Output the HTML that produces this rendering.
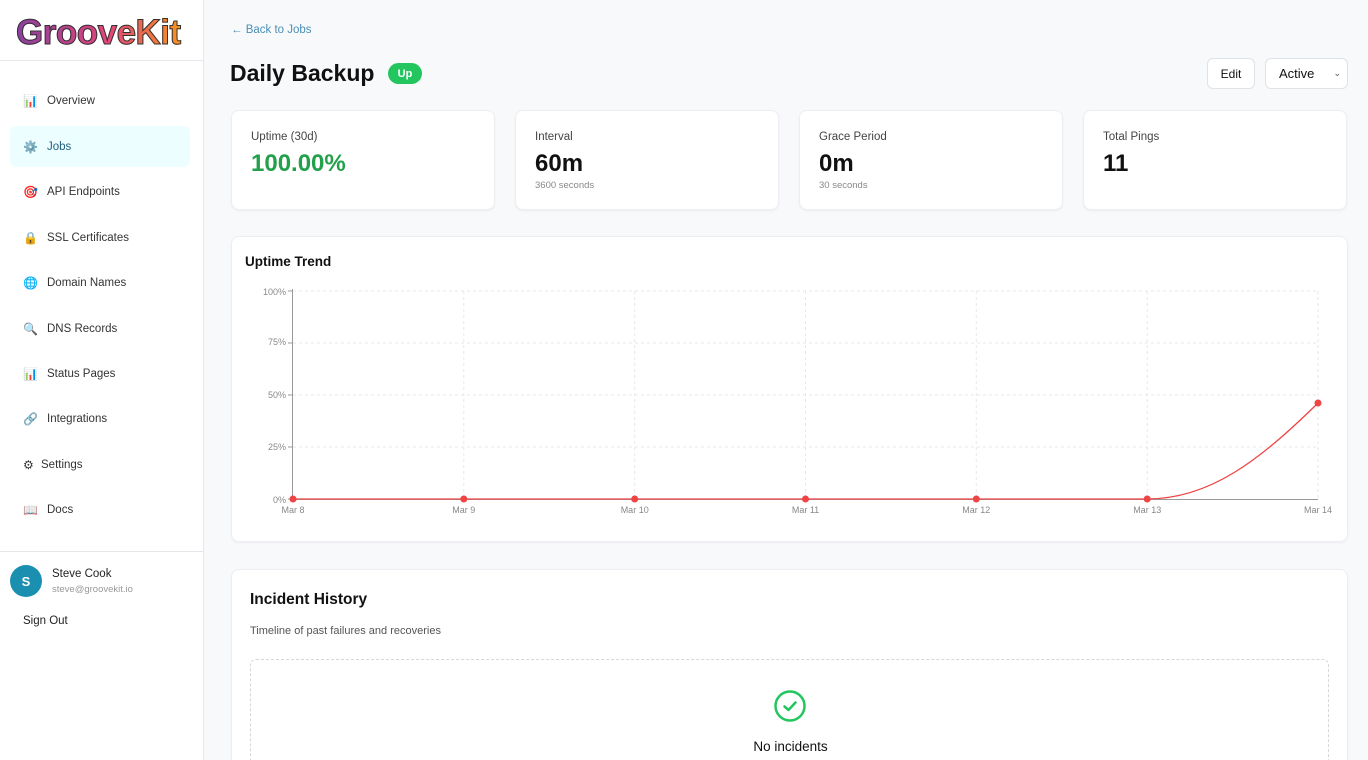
<!DOCTYPE html>
<html><head><meta charset="utf-8"><style>
*{box-sizing:border-box;margin:0;padding:0}
html,body{width:1368px;height:760px;overflow:hidden}
body{background:#f8f9fb;font-family:"Liberation Sans",Arial,sans-serif;color:#111;position:relative}
.sb{position:absolute;left:0;top:0;width:204px;height:760px;background:#fff;border-right:1px solid #e5e7eb}
.logo{position:absolute;left:16px;top:13px;font-size:35px;font-weight:900;letter-spacing:-0.5px;background:linear-gradient(90deg,#8b3fa0,#e0457a 55%,#f7931e);-webkit-background-clip:text;color:transparent;-webkit-text-stroke:1px #333}
.hr{position:absolute;left:0;width:203px;height:1px;background:#e5e7eb}
.nav{position:absolute;left:10px;width:180px;height:41px;display:flex;align-items:center;padding-left:13px;font-size:11.5px;color:#333;border-radius:6px}
.nav .i{width:16px;font-size:12px;margin-right:8px}
.nav.act{background:#ecfeff;color:#1f5f7a}
.card{position:absolute;background:#fff;border:1px solid #eceef1;border-radius:8px;box-shadow:0 1px 2px rgba(0,0,0,.05)}
.lbl{position:absolute;left:19px;top:20px;font-size:11.5px;color:#444}
.val{position:absolute;left:19px;top:39px;font-size:24px;font-weight:700}
.sub{position:absolute;left:19px;top:69px;font-size:9.5px;color:#888}
.btn{position:absolute;background:#fff;border:1px solid #dfe2e6;border-radius:6px;font-size:12px;display:flex;align-items:center}
</style></head><body>
<div class="sb">
<div class="logo">GrooveKit</div>
<div class="hr" style="top:60px"></div>
<div class="nav" style="top:80px"><span class="i">📊</span>Overview</div>
<div class="nav act" style="top:126px"><span class="i">⚙️</span>Jobs</div>
<div class="nav" style="top:171px"><span class="i">🎯</span>API Endpoints</div>
<div class="nav" style="top:217px"><span class="i">🔒</span>SSL Certificates</div>
<div class="nav" style="top:262px"><span class="i">🌐</span>Domain Names</div>
<div class="nav" style="top:308px"><span class="i">🔍</span>DNS Records</div>
<div class="nav" style="top:353px"><span class="i">📊</span>Status Pages</div>
<div class="nav" style="top:398px"><span class="i">🔗</span>Integrations</div>
<div class="nav" style="top:444px"><span class="i" style="width:10px">⚙</span>Settings</div>
<div class="nav" style="top:489px"><span class="i">📖</span>Docs</div>
<div class="hr" style="top:551px"></div>
<div style="position:absolute;left:10px;top:565px;width:32px;height:32px;border-radius:50%;background:#1a8fb0;color:#fff;font-weight:700;font-size:13px;display:flex;align-items:center;justify-content:center">S</div>
<div style="position:absolute;left:52px;top:568px;font-size:11.5px;color:#222">Steve Cook</div>
<div style="position:absolute;left:52px;top:584px;font-size:9.5px;color:#999">steve@groovekit.io</div>
<div style="position:absolute;left:23px;top:615px;font-size:11.5px;color:#222">Sign Out</div>
</div>

<div style="position:absolute;left:231px;top:24px;font-size:11.5px;color:#4a8fb5">← Back to Jobs</div>
<div style="position:absolute;left:230px;top:60px;font-size:23px;font-weight:700">Daily Backup</div>
<div style="position:absolute;left:388px;top:63px;width:34px;height:21px;border-radius:11px;background:#22c55e;color:#fff;font-size:11px;font-weight:700;display:flex;align-items:center;justify-content:center">Up</div>
<div class="btn" style="left:1207px;top:58px;width:48px;height:31px;justify-content:center">Edit</div>
<div class="btn" style="left:1265px;top:58px;width:83px;height:31px;padding-left:13px;font-size:13px">Active<span style="position:absolute;right:6px;font-size:9px;color:#555">⌄</span></div>

<div class="card" style="left:231px;top:110px;width:264px;height:100px"><div class="lbl">Uptime (30d)</div><div class="val" style="color:#22a04a">100.00%</div></div>
<div class="card" style="left:515px;top:110px;width:264px;height:100px"><div class="lbl">Interval</div><div class="val">60m</div><div class="sub">3600 seconds</div></div>
<div class="card" style="left:799px;top:110px;width:264px;height:100px"><div class="lbl">Grace Period</div><div class="val">0m</div><div class="sub">30 seconds</div></div>
<div class="card" style="left:1083px;top:110px;width:264px;height:100px"><div class="lbl">Total Pings</div><div class="val">11</div></div>

<div class="card" style="left:231px;top:236px;width:1117px;height:306px"><div style="position:absolute;left:13px;top:17px;font-size:13.5px;font-weight:600">Uptime Trend</div></div>
<svg style="position:absolute;left:0;top:0" width="1368" height="760" font-family="Liberation Sans,Arial" font-size="9" fill="#888">
<g stroke="#e5e7eb" stroke-dasharray="3 3">
<line x1="293" y1="291" x2="1318" y2="291"/><line x1="293" y1="343" x2="1318" y2="343"/><line x1="293" y1="395" x2="1318" y2="395"/><line x1="293" y1="447" x2="1318" y2="447"/>
<line x1="463.8" y1="291" x2="463.8" y2="499"/><line x1="634.7" y1="291" x2="634.7" y2="499"/><line x1="805.5" y1="291" x2="805.5" y2="499"/><line x1="976.3" y1="291" x2="976.3" y2="499"/><line x1="1147.2" y1="291" x2="1147.2" y2="499"/><line x1="1318" y1="291" x2="1318" y2="499"/>
</g>
<line x1="292.5" y1="289" x2="292.5" y2="500" stroke="#999"/><line x1="292" y1="499.5" x2="1318" y2="499.5" stroke="#999"/>
<g stroke="#999"><line x1="288" y1="291" x2="292" y2="291"/><line x1="288" y1="343" x2="292" y2="343"/><line x1="288" y1="395" x2="292" y2="395"/><line x1="288" y1="447" x2="292" y2="447"/><line x1="288" y1="499" x2="292" y2="499"/></g>
<g text-anchor="end"><text x="286" y="295">100%</text><text x="286" y="345">75%</text><text x="286" y="398">50%</text><text x="286" y="450">25%</text><text x="286" y="503">0%</text></g>
<g text-anchor="middle"><text x="293" y="513">Mar 8</text><text x="463.8" y="513">Mar 9</text><text x="634.7" y="513">Mar 10</text><text x="805.5" y="513">Mar 11</text><text x="976.3" y="513">Mar 12</text><text x="1147.2" y="513">Mar 13</text><text x="1318" y="513">Mar 14</text></g>
<path d="M293 499 L1147.2 499 C1210 499 1260 460 1318 403" fill="none" stroke="#ef4444" stroke-width="1.3"/>
<g fill="#ef4444"><circle cx="293" cy="499" r="3.5"/><circle cx="463.8" cy="499" r="3.5"/><circle cx="634.7" cy="499" r="3.5"/><circle cx="805.5" cy="499" r="3.5"/><circle cx="976.3" cy="499" r="3.5"/><circle cx="1147.2" cy="499" r="3.5"/><circle cx="1318" cy="403" r="3.5"/></g>
</svg>

<div class="card" style="left:231px;top:569px;width:1117px;height:191px;overflow:hidden;border-bottom:none;border-radius:8px 8px 0 0">
<div style="position:absolute;left:18px;top:21px;font-size:15.5px;font-weight:600">Incident History</div>
<div style="position:absolute;left:18px;top:55px;font-size:11px;color:#555">Timeline of past failures and recoveries</div>
<div style="position:absolute;left:18px;top:89px;width:1079px;height:102px;border:1px dashed #d4d7dc;border-bottom:none;border-radius:6px 6px 0 0"></div>
<svg style="position:absolute;left:541px;top:119px" width="34" height="34" viewBox="0 0 34 34"><circle cx="17" cy="17" r="14.5" fill="none" stroke="#22c55e" stroke-width="2.5"/><path d="M11.5 17.5l4 3.5 7-7.5" fill="none" stroke="#22c55e" stroke-width="2.5" stroke-linecap="round" stroke-linejoin="round"/></svg>
<div style="position:absolute;left:0;width:1117px;top:169px;text-align:center;font-size:13.5px">No incidents</div>
</div>
</body></html>
